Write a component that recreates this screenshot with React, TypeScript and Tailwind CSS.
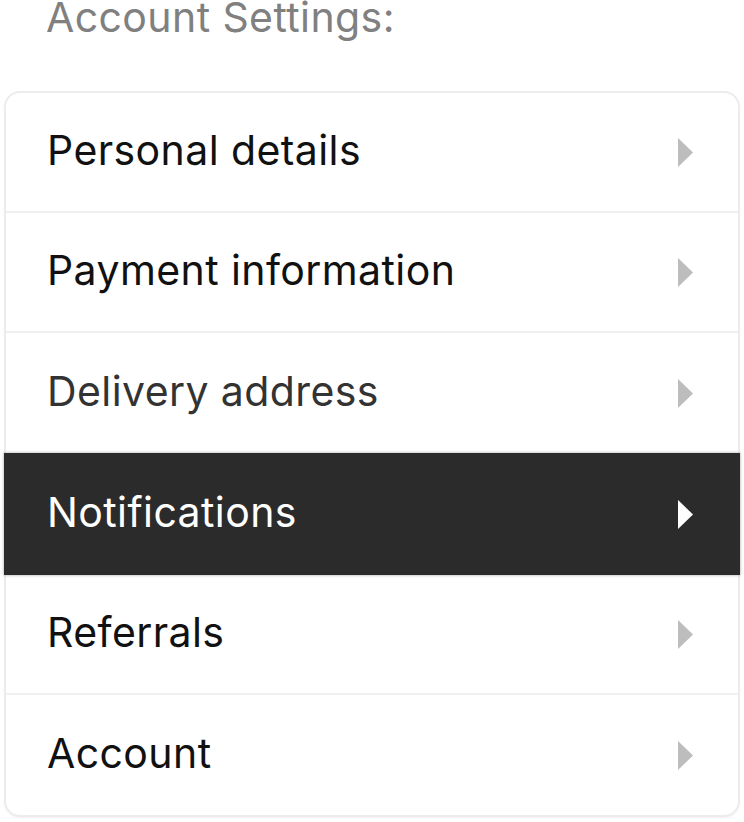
import React from "react";

const items = [
  { label: "Personal details", state: "normal" },
  { label: "Payment information", state: "normal" },
  { label: "Delivery address", state: "hover" },
  { label: "Notifications", state: "active" },
  { label: "Referrals", state: "normal" },
  { label: "Account", state: "normal" },
];

function Tri({ color }: { color: string }) {
  return (
    <svg width="15" height="29" viewBox="0 0 15 29" className="block">
      <polygon points="0,0 15,14.5 0,29" fill={color} />
    </svg>
  );
}

export default function App() {
  return (
    <div
      className="w-[744px] h-[822px] bg-white overflow-hidden"
      style={{ fontFamily: "Inter, 'Noto Sans', sans-serif" }}
    >
      <div className="h-[91px] pl-[46px]">
        <div className="text-[41px] leading-[34px] text-[#808080] tracking-[0.01em]">
          Account Settings:
        </div>
      </div>
      <div className="mx-[4px] border-2 border-[#ececec] rounded-[16px] shadow-[0_1px_2px_rgba(0,0,0,0.06)]">
        {items.map((it, i) => {
          const active = it.state === "active";
          return (
            <div
              key={it.label}
              className={
                active
                  ? "-mx-[2px] h-[122px] bg-[#2b2b2b] flex items-center justify-between pl-[43px] pr-[47px] text-white shadow-[0_0_3px_rgba(0,0,0,0.35)] relative"
                  : `h-[120px] flex items-center justify-between pl-[41px] pr-[45px] ${
                      i < items.length - 1 && items[i + 1].state !== "active" ? "border-b-2 border-[#f0f0f0]" : ""
                    } ${it.state === "hover" ? "text-[#333333]" : "text-[#111111]"}`
              }
            >
              <span className="text-[41px] leading-none tracking-[0.01em] pb-[4px]">{it.label}</span>
              <Tri color={active ? "#ffffff" : "#bdbdbd"} />
            </div>
          );
        })}
      </div>
    </div>
  );
}
